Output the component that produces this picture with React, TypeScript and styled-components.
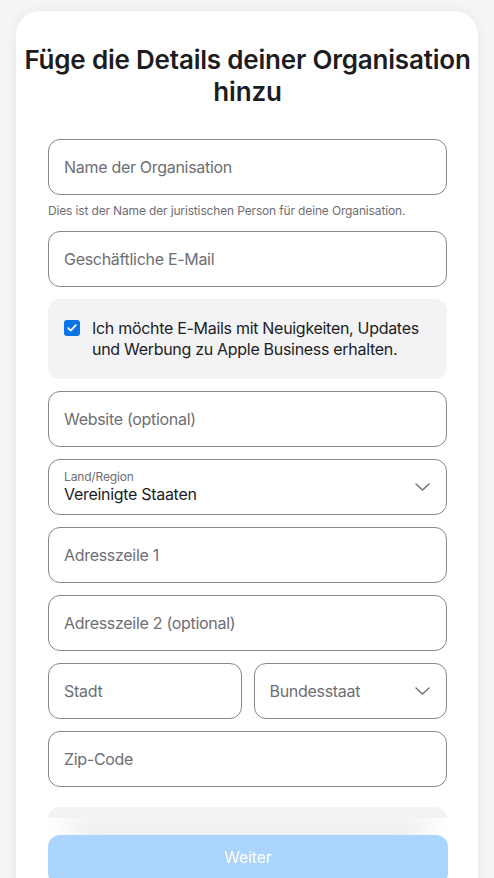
import React from "react";
import styled, { createGlobalStyle } from "styled-components";

const Global = createGlobalStyle`
  html, body { margin: 0; padding: 0; background: #f5f5f7; }
  body { font-family: Inter, "Noto Sans", Arial, sans-serif; color: #1d1d1f; -webkit-font-smoothing: antialiased; }
  * { box-sizing: border-box; }
`;

const Page = styled.div`
  padding: 11px 16px 0 16px;
`;

const Card = styled.div`
  width: 462px;
  background: #fff;
  border-radius: 24px;
  box-shadow: 0 0 12px rgba(0, 0, 0, 0.06);
  padding: 33px 31px 120px 32px;
  display: flex;
  flex-direction: column;
`;

const Title = styled.h1`
  margin: 0 -24px 31px -24px;
  font-size: 26px;
  line-height: 32px;
  font-weight: 600;
  text-align: center;
  letter-spacing: -0.2px;
  color: #1d1d1f;
`;

const Form = styled.div`
  display: flex;
  flex-direction: column;
  gap: 12px;
`;

const Group = styled.div`
  display: flex;
  flex-direction: column;
`;

const Field = styled.input`
  width: 100%;
  height: 56px;
  border: 1px solid #86868b;
  border-radius: 12px;
  padding: 0 15px;
  font-family: inherit;
  font-size: 16px;
  letter-spacing: -0.3px;
  color: #1d1d1f;
  background: #fff;
  outline: none;
  &::placeholder { color: #6e6e73; opacity: 1; }
`;

const Helper = styled.div`
  margin: 8px 0 0 0;
  font-size: 12px;
  line-height: 16px;
  letter-spacing: -0.15px;
  color: #6e6e73;
`;

const Panel = styled.label`
  display: flex;
  align-items: flex-start;
  gap: 12px;
  background: #f3f3f5;
  border-radius: 12px;
  padding: 19px 16px 17px 16px;
  min-height: 80px;
`;

const Box = styled.span`
  flex: none;
  width: 16px;
  height: 16px;
  margin-top: 2px;
  border-radius: 3px;
  background: #0a74e6;
  display: flex;
  align-items: center;
  justify-content: center;
`;

const PanelText = styled.span`
  font-size: 16px;
  line-height: 21px;
  letter-spacing: -0.3px;
  color: #1d1d1f;
`;

const Select = styled.div`
  height: 56px;
  border: 1px solid #86868b;
  border-radius: 12px;
  padding: 0 16px 0 15px;
  display: flex;
  align-items: center;
  justify-content: space-between;
  background: #fff;
`;

const SelectBody = styled.div`
  display: flex;
  flex-direction: column;
`;

const SelectLabel = styled.span`
  font-size: 12px;
  line-height: 14px;
  letter-spacing: -0.15px;
  color: #6e6e73;
`;

const SelectValue = styled.span<{ $placeholder?: boolean }>`
  font-size: 16px;
  line-height: 20px;
  letter-spacing: -0.3px;
  color: ${(p) => (p.$placeholder ? "#6e6e73" : "#1d1d1f")};
`;

const Row = styled.div`
  display: grid;
  grid-template-columns: 1fr 1fr;
  gap: 12px;
`;

const Extra = styled.div`
  margin-top: 8px;
  height: 80px;
  border-radius: 12px;
  background: #f3f3f5;
`;

const Footer = styled.div`
  position: fixed;
  left: 22px;
  right: 22px;
  bottom: 0;
  height: 60px;
  overflow: hidden;
  padding: 17px 9px 0 26px;
  background: linear-gradient(to right, rgba(255,255,255,0) 0%, #fff 6%, #fff 94%, rgba(255,255,255,0) 100%);
`;

const Button = styled.button`
  width: 400px;
  height: 50px;
  border: none;
  border-radius: 12px;
  background: #aad4fc;
  color: #fff;
  font-family: inherit;
  font-size: 16px;
  letter-spacing: -0.2px;
  box-shadow: 0 -30px 28px -22px rgba(0, 0, 0, 0.35);
  padding: 0 0 6px 0;
`;

const Chevron = () => (
  <svg width="15" height="8" viewBox="0 0 15 8" fill="none">
    <path d="M1 1l6.5 6 6.5-6" stroke="#6e6e73" strokeWidth="1.4" strokeLinecap="round" strokeLinejoin="round" />
  </svg>
);

export default function App() {
  return (
    <Page>
      <Global />
      <Card>
        <Title>Füge die Details deiner Organisation hinzu</Title>
        <Form>
          <Group>
            <Field placeholder="Name der Organisation" />
            <Helper>Dies ist der Name der juristischen Person für deine Organisation.</Helper>
          </Group>
          <Field placeholder="Geschäftliche E-Mail" />
          <Panel>
            <Box>
              <svg width="10" height="8" viewBox="0 0 10 8" fill="none">
                <path d="M1.2 4.2l2.5 2.4L8.8 1.2" stroke="#fff" strokeWidth="1.8" strokeLinecap="round" strokeLinejoin="round" />
              </svg>
            </Box>
            <PanelText>Ich möchte E-Mails mit Neuigkeiten, Updates und Werbung zu Apple Business erhalten.</PanelText>
          </Panel>
          <Field placeholder="Website (optional)" />
          <Select>
            <SelectBody>
              <SelectLabel>Land/Region</SelectLabel>
              <SelectValue>Vereinigte Staaten</SelectValue>
            </SelectBody>
            <Chevron />
          </Select>
          <Field placeholder="Adresszeile 1" />
          <Field placeholder="Adresszeile 2 (optional)" />
          <Row>
            <Field placeholder="Stadt" />
            <Select>
              <SelectValue $placeholder>Bundesstaat</SelectValue>
              <Chevron />
            </Select>
          </Row>
          <Field placeholder="Zip-Code" />
          <Extra />
        </Form>
      </Card>
      <Footer>
        <Button>Weiter</Button>
      </Footer>
    </Page>
  );
}
